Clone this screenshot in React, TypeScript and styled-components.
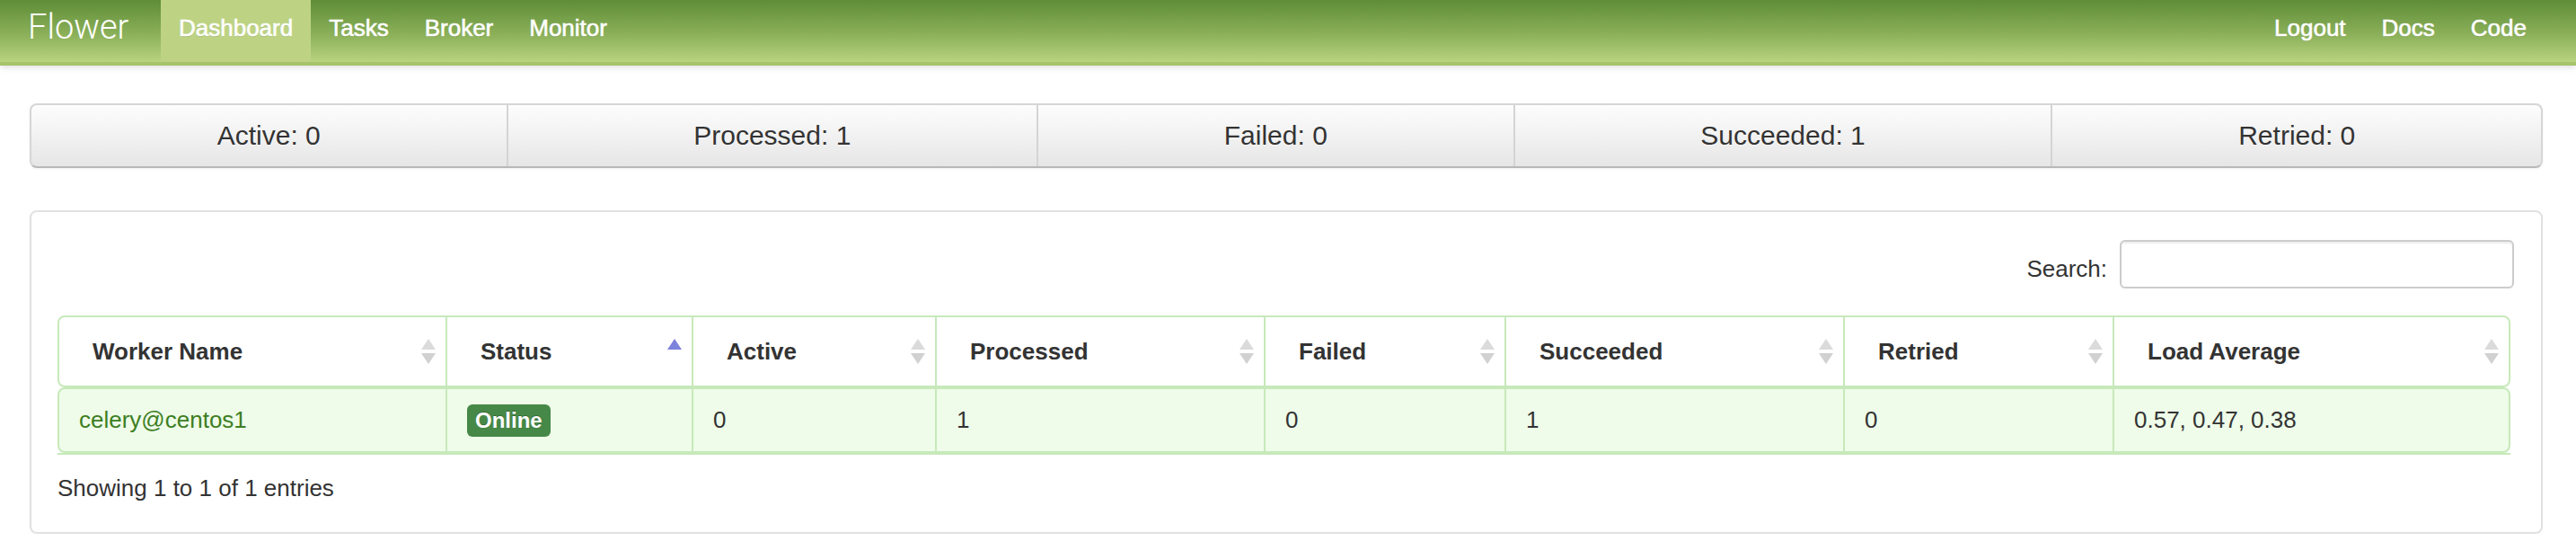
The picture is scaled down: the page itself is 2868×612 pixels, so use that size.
import React from 'react';
import styled, { createGlobalStyle } from 'styled-components';

const GREEN_LINE = '#c7e9ba';

const GlobalStyle = createGlobalStyle`
  html, body { margin: 0; padding: 0; background: #fff; }
  body { font-family: "Liberation Sans", Arial, Helvetica, sans-serif; color: #333; }
  *, *::before, *::after { box-sizing: border-box; }
`;

const Navbar = styled.header`
  height: 73px;
  display: flex;
  align-items: flex-start;
  padding: 0 35px 0 31px;
  background: linear-gradient(to bottom, #5f8d38 0%, #8bb059 55%, #b9d37f 100%);
  border-bottom: 4px solid #a7c36c;
  box-shadow: 0 2px 7px rgba(0, 0, 0, 0.13);
`;

const Brand = styled.a`
  flex: none;
  width: 148px;
  font-family: Roboto, "Liberation Sans", sans-serif;
  font-weight: 300;
  font-size: 38px;
  line-height: 60px;
  color: #fff;
  text-decoration: none;
`;

const NavList = styled.nav<{ $right?: boolean }>`
  display: flex;
  margin-left: ${(p) => (p.$right ? 'auto' : '0')};
`;

const NavLink = styled.a<{ $active?: boolean }>`
  display: block;
  height: 69px;
  padding: 0 20px;
  font-size: 26px;
  line-height: 62px;
  color: #fff;
  text-decoration: none;
  -webkit-text-stroke: 0.6px #fff;
  text-shadow: 0 1px 0 rgba(60, 90, 30, 0.25);
  background: ${(p) => (p.$active ? '#bdd383' : 'transparent')};
`;

const Main = styled.main`
  padding: 42px 37px 0 33px;
`;

const StatsBar = styled.div`
  display: flex;
  height: 72px;
  border: 2px solid #d6d6d6;
  border-bottom-color: #b8b8b8;
  border-radius: 8px;
  background: linear-gradient(to bottom, #fdfdfd 0%, #e6e6e6 100%);
  box-shadow: 0 1px 3px rgba(0, 0, 0, 0.06);
  overflow: hidden;
`;

const StatItem = styled.div`
  flex: 1 1 auto;
  text-align: center;
  font-size: 30px;
  line-height: 68px;
  color: #333;
  text-shadow: 0 1px 1px rgba(255, 255, 255, 0.75);
  & + & {
    border-left: 2px solid #d4d4d4;
  }
`;

const Panel = styled.section`
  margin-top: 47px;
  border: 2px solid #e1e1e1;
  border-radius: 8px;
  padding: 31px 30px 29px 29px;
  box-shadow: 0 1px 2px rgba(0, 0, 0, 0.04);
`;

const SearchRow = styled.div`
  display: flex;
  justify-content: flex-end;
  align-items: center;
  gap: 14px;
`;

const SearchLabel = styled.label`
  font-size: 26px;
  color: #333;
  padding-top: 10px;
`;

const SearchInput = styled.input`
  width: 439px;
  height: 54px;
  border: 2px solid #cccccc;
  border-radius: 6px;
  box-shadow: inset 0 2px 2px rgba(0, 0, 0, 0.075);
  background: #fff;
  font-size: 26px;
  padding: 0 10px;
  outline: none;
`;

const Table = styled.div`
  margin: 30px 4px 0 0;
  border-bottom: 2px solid ${GREEN_LINE};
`;

const COLUMNS = '430px 274px 271px 366px 268px 377px 300px 441px';

const HeadRow = styled.div`
  display: grid;
  grid-template-columns: ${COLUMNS};
  height: 80px;
  border: 2px solid ${GREEN_LINE};
  border-radius: 8px;
  background: #fff;
`;

const BodyRow = styled.div`
  display: grid;
  grid-template-columns: ${COLUMNS};
  height: 73px;
  border: 2px solid ${GREEN_LINE};
  border-radius: 8px;
  background: #eefce9;
`;

const HeadCell = styled.div`
  display: flex;
  align-items: center;
  justify-content: space-between;
  padding: 0 11px 0 37px;
  font-size: 26px;
  font-weight: bold;
  color: #333;
  & + & {
    border-left: 2px solid ${GREEN_LINE};
  }
`;

const Cell = styled.div`
  display: flex;
  align-items: center;
  padding: 0 12px 0 22px;
  font-size: 26px;
  color: #333;
  & + & {
    border-left: 2px solid ${GREEN_LINE};
  }
`;

const WorkerLink = styled.a`
  color: #3d7e22;
  text-decoration: none;
  font-size: 26px;
`;

const Badge = styled.span`
  display: inline-block;
  height: 36px;
  padding: 0 9px;
  border-radius: 6px;
  background: #468847;
  color: #fff;
  font-size: 24px;
  font-weight: bold;
  line-height: 36px;
  text-shadow: 0 -1px 0 rgba(0, 0, 0, 0.25);
`;

const Info = styled.div`
  margin-top: 17px;
  font-size: 26px;
  line-height: 40px;
  color: #333;
`;

type SortState = 'both' | 'asc';

const SortIcon: React.FC<{ state: SortState }> = ({ state }) => (
  <svg width="16" height="28" viewBox="0 0 16 28" aria-hidden="true">
    {state === 'asc' ? (
      <polygon points="8,0 16,12 0,12" fill="#7d82db" />
    ) : (
      <>
        <polygon points="8,0 16,12 0,12" fill="#dbdbdb" />
        <polygon points="0,16 16,16 8,28" fill="#d1d1d1" />
      </>
    )}
  </svg>
);

const stats = [
  { label: 'Active', value: 0 },
  { label: 'Processed', value: 1 },
  { label: 'Failed', value: 0 },
  { label: 'Succeeded', value: 1 },
  { label: 'Retried', value: 0 },
];

const headers: { title: string; sort: SortState }[] = [
  { title: 'Worker Name', sort: 'both' },
  { title: 'Status', sort: 'asc' },
  { title: 'Active', sort: 'both' },
  { title: 'Processed', sort: 'both' },
  { title: 'Failed', sort: 'both' },
  { title: 'Succeeded', sort: 'both' },
  { title: 'Retried', sort: 'both' },
  { title: 'Load Average', sort: 'both' },
];

export default function App() {
  return (
    <>
      <GlobalStyle />
      <Navbar>
        <Brand href="#">Flower</Brand>
        <NavList>
          <NavLink href="#" $active>Dashboard</NavLink>
          <NavLink href="#">Tasks</NavLink>
          <NavLink href="#">Broker</NavLink>
          <NavLink href="#">Monitor</NavLink>
        </NavList>
        <NavList $right>
          <NavLink href="#">Logout</NavLink>
          <NavLink href="#">Docs</NavLink>
          <NavLink href="#">Code</NavLink>
        </NavList>
      </Navbar>
      <Main>
        <StatsBar>
          {stats.map((s) => (
            <StatItem key={s.label}>
              {s.label}: {s.value}
            </StatItem>
          ))}
        </StatsBar>
        <Panel>
          <SearchRow>
            <SearchLabel htmlFor="search">Search:</SearchLabel>
            <SearchInput id="search" type="text" />
          </SearchRow>
          <Table>
            <HeadRow>
              {headers.map((h) => (
                <HeadCell key={h.title}>
                  <span>{h.title}</span>
                  <SortIcon state={h.sort} />
                </HeadCell>
              ))}
            </HeadRow>
            <BodyRow>
              <Cell>
                <WorkerLink href="#">celery@centos1</WorkerLink>
              </Cell>
              <Cell>
                <Badge>Online</Badge>
              </Cell>
              <Cell>0</Cell>
              <Cell>1</Cell>
              <Cell>0</Cell>
              <Cell>1</Cell>
              <Cell>0</Cell>
              <Cell>0.57, 0.47, 0.38</Cell>
            </BodyRow>
          </Table>
          <Info>Showing 1 to 1 of 1 entries</Info>
        </Panel>
      </Main>
    </>
  );
}
